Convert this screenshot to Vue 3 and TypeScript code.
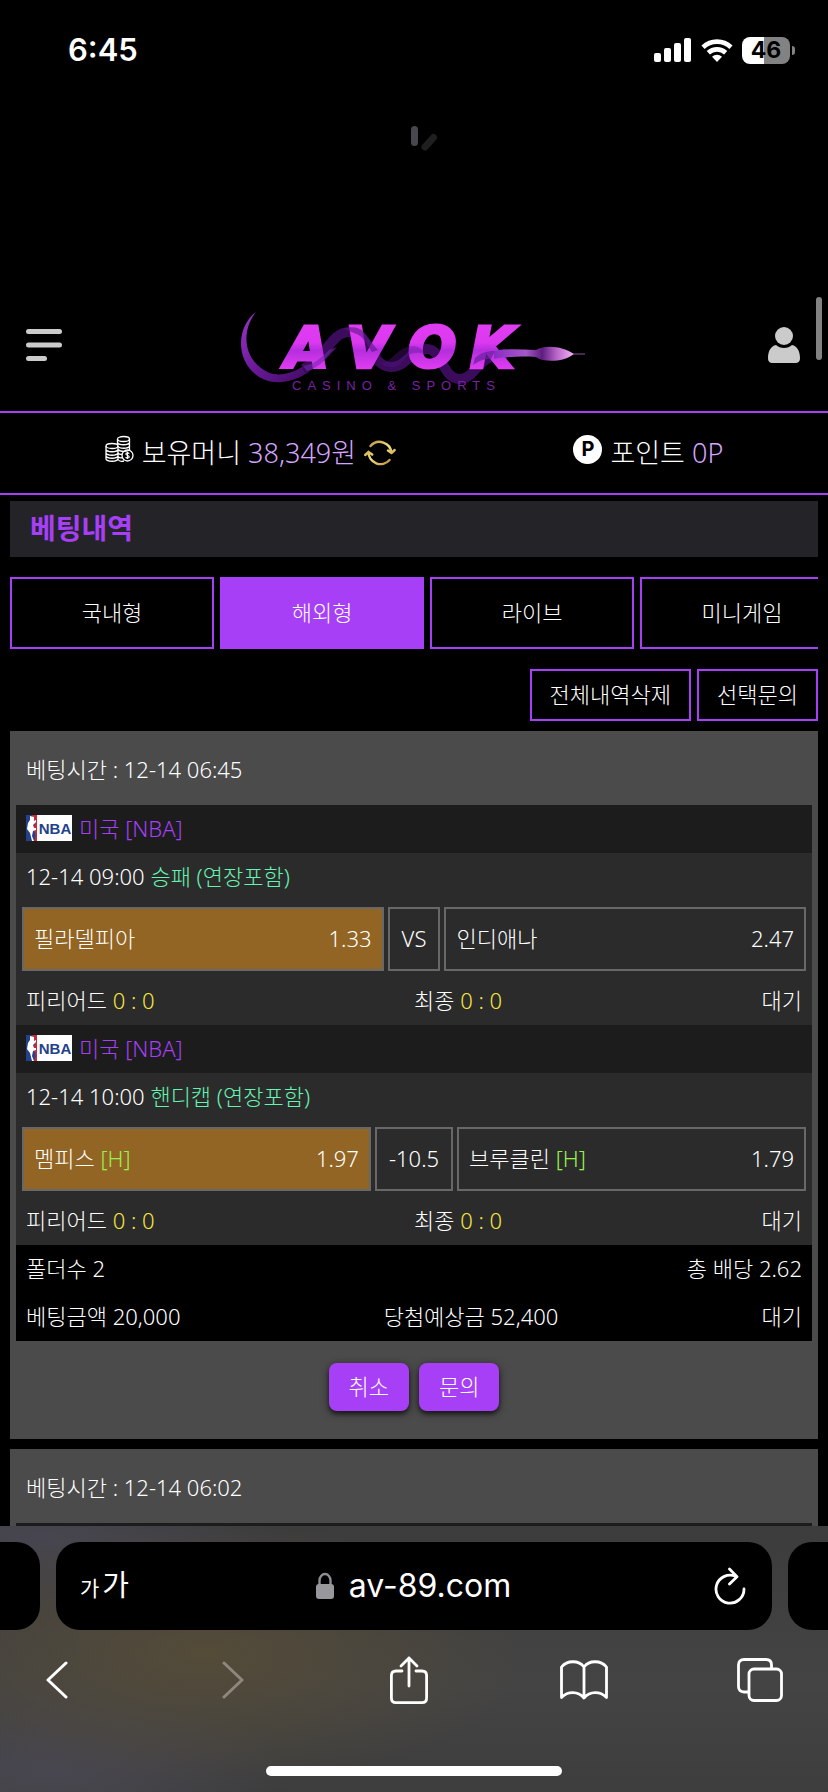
<script setup lang="ts">
interface Team { name: string; odds: string; picked?: boolean; handicap?: boolean }
interface Match { kickoff: string; market: string; home: Team; middle: string; away: Team }
interface Slip { time: string; matches: Match[] }

const tabs: string[] = ['국내형', '해외형', '라이브', '미니게임']
const activeTab = '해외형'

const slip: Slip = {
  time: '12-14 06:45',
  matches: [
    {
      kickoff: '12-14 09:00',
      market: '승패 (연장포함)',
      home: { name: '필라델피아', odds: '1.33', picked: true },
      middle: 'VS',
      away: { name: '인디애나', odds: '2.47' },
    },
    {
      kickoff: '12-14 10:00',
      market: '핸디캡 (연장포함)',
      home: { name: '멤피스', odds: '1.97', picked: true, handicap: true },
      middle: '-10.5',
      away: { name: '브루클린', odds: '1.79', handicap: true },
    },
  ],
}
</script>

<template>
  <div class="phone">
    <div class="status">
      <span class="clock">6:45</span>
      <div class="indicators">
        <svg width="38" height="24" viewBox="0 0 38 24" fill="#fff">
          <rect x="0" y="15" width="7" height="9" rx="2" />
          <rect x="10" y="10" width="7" height="14" rx="2" />
          <rect x="20" y="5" width="7" height="19" rx="2" />
          <rect x="30" y="0" width="7" height="24" rx="2" />
        </svg>
        <svg width="32" height="24" viewBox="0 0 32 24" fill="none" stroke="#fff" stroke-width="4.6">
          <path d="M2 9.2a20.5 20.5 0 0 1 28 0" />
          <path d="M7.3 14.8a12.8 12.8 0 0 1 17.4 0" />
          <path d="M16 24l-5-5.2a7.4 7.4 0 0 1 10 0z" fill="#fff" stroke="none" />
        </svg>
        <div class="battery"><span>46</span></div>
      </div>
    </div>

    <main class="page">
      <div class="pull">
        <svg width="56" height="56" viewBox="0 0 56 56" stroke-width="7" stroke-linecap="round">
          <path d="M28.500 5.500v13" stroke="#48474d" />
          <path d="M47.500 13.500l-8.500 9.500" stroke="#1f1f20" />
        </svg>
      </div>
      <i class="scroll-thumb"></i>

      <header class="top">
        <button class="plain" aria-label="메뉴">
          <svg width="36" height="32" viewBox="0 0 36 32" fill="#cbcbcb">
            <rect width="36" height="5" rx="2.500" />
            <rect y="13.500" width="36" height="5" rx="2.500" />
            <rect y="27" width="21" height="5" rx="2.500" />
          </svg>
        </button>
        <a href="#" class="logo" aria-label="AVOK">
          <svg width="352" height="94" viewBox="0 0 352 94">
            <defs>
              <linearGradient id="letters" gradientUnits="userSpaceOnUse" x1="0" y1="27" x2="0" y2="71">
                <stop offset="0" stop-color="#e03cf2" />
                <stop offset=".4" stop-color="#dc38f0" />
                <stop offset=".58" stop-color="#b42ede" />
                <stop offset=".75" stop-color="#c834e6" />
                <stop offset="1" stop-color="#e03cf2" />
              </linearGradient>
              <linearGradient id="head" x1="0" y1="0" x2="1" y2="0">
                <stop offset="0" stop-color="#8a2bc4" />
                <stop offset=".4" stop-color="#a55ac6" />
                <stop offset=".6" stop-color="#5d1c80" />
                <stop offset=".78" stop-color="#b765c8" />
                <stop offset="1" stop-color="#f7b4f8" />
              </linearGradient>
              <linearGradient id="tail" x1="0" y1="0" x2="1" y2="1">
                <stop offset="0" stop-color="#9a35c8" />
                <stop offset=".5" stop-color="#6a1a98" />
                <stop offset="1" stop-color="#3f0b63" />
              </linearGradient>
            </defs>
            <path d="M17 14C-2 28-5 62 20 79c15 9 33 6 50-5l-4-7C50 78 34 80 22 70 3 56 4 30 17 14z" fill="url(#tail)" />
            <path d="M64 71C86 62 92 34 110 34c20 0 22 35 42 35 16 0 20-18 36-18 15 0 16 30 32 30 18 0 16-24 48-25" fill="none" stroke="#3a0c5b" stroke-width="10" />
            <text class="wordmark" x="46 107 169 231" y="70" fill="url(#letters)" stroke="url(#letters)">AVOK</text>
            <path d="M104 31c8-3 16-2 21 3 6 7 8 12 14 18l-6 2c-8-12-10-17-18-19-4-2-7-3-11-4z" fill="#5a1787" opacity=".6" />
            <path d="M68 73c14-4 20-14 30-24l-8 3c-8 8-14 14-26 16z" fill="#7a24b4" opacity=".6" />
            <path d="M142 66c12-3 16-17 32-18 6 0 10 4 12 8-14-4-18 2-24 9-4 5-10 5-16 3z" fill="#5a1590" opacity=".35" />
            <path d="M236 60c6-5 10-7 20-7l-4 8c-8 0-12 2-18 6z" fill="#6a1fa0" opacity=".7" />
            <path d="M255 53c14-3 28-1 42-1 10-6 28-3 38 4-10 8-30 9-38 3-16-1-32 0-42 2z" fill="url(#head)" />
            <path d="M334 56h12" stroke="#87579a" />
            <text class="tagline" x="53" y="92">CASINO &amp; SPORTS</text>
          </svg>
        </a>
        <button class="plain" aria-label="내 정보">
          <svg width="32" height="36" viewBox="0 0 32 36" fill="#cbcbcb">
            <circle cx="16" cy="9" r="9" />
            <path d="M8 18c4 4 12 4 16 0 5 1 8 6 8 13 0 4-2 5-5 5H5c-3 0-5-1-5-5 0-7 3-12 8-13z" />
          </svg>
        </button>
      </header>

      <section class="balance">
        <div class="balance-item">
          <svg width="29" height="28" viewBox="0 0 29 28" fill="none" stroke="#fff" stroke-width="1.300">
            <ellipse cx="18.500" cy="4" rx="6" ry="2.500" />
            <path d="M12.500 4v6M24.500 4v11M12.500 7.500c1 3 11 3 12 0M12.500 11c2 3 11 3 12 0M13 14.500c2 2.500 10 2.500 11.500 0" />
            <ellipse cx="7" cy="11" rx="6" ry="2.500" />
            <path d="M1 11v13c1 3 11 3 12 0V11M1 14.500c1 3 11 3 12 0M1 18c1 3 11 3 12 0M1 21c1 3 11 3 12 0M13 18c1 1 3 1.500 4 1.200M13 21.500c1 1 3 1.500 4 1.200M13 24.500c1 1.500 4 2 6 1.500" />
            <circle cx="22.500" cy="20.500" r="5.500" />
            <path d="M24.300 18.700c-1-1.300-3.500-1-3.500.4 0 1.700 3.500 1 3.500 2.700 0 1.500-2.700 1.700-3.700.3M22.500 17v7" stroke-width="1.100" />
          </svg>
          <span>보유머니 <b>38,349원</b></span>
          <button class="plain" aria-label="새로고침">
            <svg width="32" height="28" viewBox="0 0 32 28" fill="none" stroke-width="2.400" stroke-linecap="round" stroke-linejoin="round">
              <defs>
                <linearGradient id="gold" x1="0" y1="0" x2="1" y2="1">
                  <stop offset="0" stop-color="#b98a3a" />
                  <stop offset=".5" stop-color="#f4df80" />
                  <stop offset="1" stop-color="#b5822f" />
                </linearGradient>
              </defs>
              <path stroke="url(#gold)" d="M6.500 7A12 12 0 0 1 27.500 14M27.500 14l-3.500-2.500M27.500 14l3.200-3M25.500 21A12 12 0 0 1 4.500 13M4.500 13l-3.300 3M4.500 13l3.700 2.500" />
            </svg>
          </button>
        </div>
        <div class="balance-item">
          <span class="point-badge">P</span>
          <span>포인트 <b>0P</b></span>
        </div>
      </section>

      <div class="content">
        <h1>베팅내역</h1>
        <nav class="tabs">
          <button v-for="tab in tabs" :key="tab" class="tab" :class="{ active: tab === activeTab }">{{ tab }}</button>
        </nav>
        <div class="actions">
          <button>전체내역삭제</button>
          <button>선택문의</button>
        </div>

        <article class="slip">
          <p class="slip-time">베팅시간 : {{ slip.time }}</p>
          <div class="slip-body">
            <section v-for="match in slip.matches" :key="match.kickoff" class="match">
              <div class="row league">
                <svg width="46" height="26" viewBox="0 0 46 26">
                  <rect width="46" height="26" fill="#fff" />
                  <rect width="11" height="26" fill="#24418c" />
                  <path d="M6 0h5v26H8c2-4 2-7 0-10l-1-4 2-3-2-4z" fill="#c22c3a" />
                  <path d="M4 1l4 1v4l2-1v2l-3 3 1 3h2v2l-3 1-1 5 2 5H6l-2-8-3-4 1-6 2-3z" fill="#fff" />
                  <text class="nba" x="29" y="19" text-anchor="middle">NBA</text>
                </svg>
                <span>미국 [NBA]</span>
              </div>
              <div class="row">
                <span>{{ match.kickoff }} <em class="market">{{ match.market }}</em></span>
              </div>
              <div class="odds">
                <button class="team" :class="{ picked: match.home.picked }">
                  <span>{{ match.home.name }} <em v-if="match.home.handicap" class="handicap">[H]</em></span>
                  <span>{{ match.home.odds }}</span>
                </button>
                <span class="middle">{{ match.middle }}</span>
                <button class="team">
                  <span>{{ match.away.name }} <em v-if="match.away.handicap" class="handicap">[H]</em></span>
                  <span>{{ match.away.odds }}</span>
                </button>
              </div>
              <div class="row">
                <span>피리어드 <em class="score">0 : 0</em></span>
                <span>최종 <em class="score">0 : 0</em></span>
                <span>대기</span>
              </div>
            </section>
            <div class="summary">
              <div class="row"><span>폴더수 2</span><span>총 배당 2.62</span></div>
              <div class="row"><span>베팅금액 20,000</span><span>당첨예상금 52,400</span><span>대기</span></div>
            </div>
          </div>
          <div class="slip-actions">
            <button>취소</button>
            <button>문의</button>
          </div>
        </article>

        <article class="slip">
          <p class="slip-time">베팅시간 : 12-14 06:02</p>
          <div class="slip-body"><div class="row league"></div></div>
        </article>
      </div>
    </main>

    <footer class="browser">
      <div class="address-strip">
        <i class="peek left"></i>
        <div class="address">
          <button class="plain text-size" aria-label="글자 크기"><small>가</small>가</button>
          <a href="#" class="host">
            <svg width="20" height="28" viewBox="0 0 20 28">
              <path d="M4.500 13V8.500a5.500 6.500 0 0 1 11 0V13" fill="none" stroke="#8e8d92" stroke-width="2.400" />
              <rect x="1" y="12" width="18" height="15" rx="3" fill="#98979c" />
            </svg>
            <span>av-89.com</span>
          </a>
          <button class="plain reload" aria-label="페이지 새로고침">
            <svg width="32" height="38" viewBox="0 0 32 38" fill="none" stroke="#fff" stroke-width="2.800" stroke-linecap="round" stroke-linejoin="round">
              <path d="M22 9.500A14 14 0 1 0 30 22M15.500 2l7.500 7.700-7.500 7.300" />
            </svg>
          </button>
        </div>
        <i class="peek right"></i>
      </div>
      <nav class="tools">
        <button class="plain" aria-label="뒤로">
          <svg width="22" height="38" viewBox="0 0 22 38" fill="none" stroke="#fff" stroke-width="3" stroke-linecap="round" stroke-linejoin="round"><path d="M20 2L2 19l18 17" /></svg>
        </button>
        <button class="plain" aria-label="앞으로" disabled>
          <svg width="22" height="38" viewBox="0 0 22 38" fill="none" stroke="#8d887e" stroke-width="3" stroke-linecap="round" stroke-linejoin="round"><path d="M2 2l18 17L2 36" /></svg>
        </button>
        <button class="plain" aria-label="공유">
          <svg width="38" height="48" viewBox="0 0 38 48" fill="none" stroke="#fff" stroke-width="2.800" stroke-linecap="round" stroke-linejoin="round"><path d="M12 15H6q-4.600 0-4.600 4.600V42q0 4.600 4.600 4.600h26q4.600 0 4.600-4.600V19.600q0-4.600-4.600-4.600h-6M19 30V2M11 10l8-8 8 8" /></svg>
        </button>
        <button class="plain" aria-label="책갈피">
          <svg width="48" height="40" viewBox="0 0 48 40" fill="none" stroke="#fff" stroke-width="2.800" stroke-linejoin="round"><path d="M24 7v31M24 7C19 0 7 0 1.500 7v30.500C8 31 18 31 24 38c6-7 16-7 22.500-.5V7C41 0 29 0 24 7z" /></svg>
        </button>
        <button class="plain" aria-label="탭">
          <svg width="46" height="44" viewBox="0 0 46 44" fill="none" stroke="#fff" stroke-width="2.800"><rect x="12" y="11" width="32.500" height="31.500" rx="5" /><path d="M12 34H7q-5.500 0-5.500-5.500V7Q1.500 1.500 7 1.500h22q5.500 0 5.500 5.500v4" /></svg>
        </button>
      </nav>
      <i class="home-bar"></i>
    </footer>
  </div>
</template>

<style>
html,
body {
  margin: 0;
  background: #000;
}
</style>

<style scoped>
* {
  box-sizing: border-box;
}
.phone {
  display: flex;
  flex-direction: column;
  height: 100vh;
  overflow: hidden;
  background: #000;
  color: #fff;
  font-family: "Noto Sans", "Noto Sans CJK KR", sans-serif;
  font-size: 22px;
  font-weight: 300;
  line-height: 46px;
}
button {
  font: inherit;
  color: inherit;
  cursor: pointer;
}
a {
  color: inherit;
  text-decoration: none;
}
em,
b,
i {
  font-style: normal;
  font-weight: inherit;
}
svg {
  display: block;
  flex: none;
}
.plain {
  border: 0;
  padding: 0;
  background: none;
}
.status {
  display: flex;
  flex: none;
  justify-content: space-between;
  align-items: center;
  height: 100px;
  padding: 0 33px 0 68px;
  font-family: Inter, sans-serif;
}
.clock {
  font-size: 31px;
  font-weight: 600;
}
.indicators {
  display: flex;
  align-items: center;
  gap: 9px;
}
.battery {
  position: relative;
  width: 48px;
  height: 27px;
  margin-right: 5px;
  border-radius: 8px;
  background: linear-gradient(90deg, #fff 46%, #828282 46%);
  color: #000;
  font-size: 23px;
  font-weight: 700;
  line-height: 27px;
  text-align: center;
}
.battery::after {
  content: "";
  position: absolute;
  left: 50px;
  top: 9px;
  width: 3px;
  height: 9px;
  border-radius: 0 3px 3px 0;
  background: #828282;
}
.page {
  position: relative;
  flex: 1;
  min-height: 0;
  overflow: hidden;
}
.pull {
  display: flex;
  justify-content: center;
  height: 179px;
  padding-top: 24px;
}
.scroll-thumb {
  position: absolute;
  top: 197px;
  right: 6px;
  width: 6px;
  height: 63px;
  border-radius: 3px;
  background: #828282;
}
.top {
  display: flex;
  justify-content: space-between;
  align-items: center;
  height: 132px;
  padding: 0 28px 0 26px;
}
.wordmark {
  font: italic 700 57px "DejaVu Sans", sans-serif;
  stroke-width: 3px;
}
.tagline {
  fill: #7a22a4;
  font: 400 13px "Liberation Sans", sans-serif;
  letter-spacing: 6px;
}
.balance {
  display: flex;
  justify-content: space-around;
  align-items: center;
  height: 84px;
  padding: 0 16px;
  border: solid #a63ff6;
  border-width: 2px 0;
  font-size: 27px;
}
.balance-item {
  display: flex;
  align-items: center;
  gap: 8px;
}
.balance-item > svg,
.point-badge {
  margin-bottom: 8px;
}
.balance-item b {
  color: #d3a4fb;
}
.point-badge {
  width: 29px;
  height: 29px;
  border-radius: 50%;
  background: #fff;
  color: #000;
  font: 700 20px/29px Inter, sans-serif;
  text-align: center;
}
.content {
  padding: 6px 10px 0;
}
h1 {
  margin: 0;
  padding: 0 20px;
  height: 56px;
  background: #242327;
  color: #a63ff6;
  font-size: 28px;
  font-weight: 700;
  line-height: 54px;
}
.tabs {
  display: flex;
  gap: 6px;
  margin-top: 20px;
  overflow: hidden;
}
.tab {
  flex: 0 0 25.25%;
  height: 72px;
  padding: 0 0 2px;
  border: 2px solid #a63ff6;
  background: #000;
}
.tab.active {
  background: #a63ff6;
}
.actions {
  display: flex;
  justify-content: flex-end;
  gap: 6px;
  margin: 20px 0 10px;
}
.actions button {
  height: 52px;
  padding: 0 18px 2px;
  border: 2px solid #a63ff6;
  background: #000;
}
.slip {
  margin-bottom: 10px;
  padding: 0 6px;
  background: #4b4b4b;
}
.slip-time {
  margin: 0;
  padding: 15px 10px 13px;
}
.slip-body {
  background: #2b2b2b;
}
.row {
  display: flex;
  justify-content: space-between;
  height: 48px;
  padding: 0 10px;
}
.league {
  justify-content: flex-start;
  gap: 7px;
  background: #1c1c1c;
  color: #a63ff6;
}
.league svg {
  margin-top: 10px;
}
.nba {
  fill: #24418c;
  font: 700 15px "Liberation Sans", sans-serif;
}
.market {
  color: #66f3b0;
}
.score {
  color: #f7e63d;
}
.handicap {
  color: #98f04e;
}
.odds {
  display: flex;
  gap: 4px;
  padding: 6px;
}
.team,
.middle {
  height: 64px;
  padding: 0 10px;
  border: 2px solid #686868;
  background: none;
  line-height: 58px;
}
.middle {
  padding: 0 12px;
}
.team {
  display: flex;
  flex: 1;
  justify-content: space-between;
}
.team.picked {
  background: #926524;
}
.summary {
  background: #000;
}
.slip-actions {
  display: flex;
  justify-content: center;
  gap: 10px;
  padding: 22px 0 28px;
}
.slip-actions button {
  height: 48px;
  padding: 0 20px 2px;
  border: 0;
  border-radius: 8px;
  background: #a63ff6;
  box-shadow: 0 3px 4px #0008, 0 2px 10px #0006;
}
.browser {
  flex: none;
  height: 266px;
  padding-top: 16px;
  background:
    radial-gradient(ellipse 320px 130px at 25% 48%, #544b38 0, #544b3800 100%),
    radial-gradient(ellipse 240px 80px at 5% 4%, #474650 0, #47465000 100%),
    radial-gradient(ellipse 240px 90px at 6% 92%, #484750 0, #48475000 100%),
    linear-gradient(#3c3c3c, #444 60%, #3d3d3d);
}
.address-strip {
  display: flex;
  gap: 16px;
}
.peek {
  flex: 0 0 40px;
  height: 88px;
  background: #000;
}
.peek.left {
  border-radius: 0 24px 24px 0;
}
.peek.right {
  border-radius: 24px 0 0 24px;
}
.address {
  display: flex;
  flex: 1;
  align-items: center;
  height: 88px;
  padding: 0 26px 0 24px;
  border-radius: 24px;
  background: #000;
}
.text-size {
  flex: 1;
  font-size: 29px;
  font-weight: 400;
  text-align: left;
}
.text-size small {
  margin-right: 3px;
  font-size: 21px;
}
.reload {
  display: flex;
  flex: 1;
  justify-content: flex-end;
}
.host {
  display: flex;
  align-items: center;
  gap: 14px;
  font: 400 32px/48px Inter, sans-serif;
}
.tools {
  display: flex;
  justify-content: space-between;
  align-items: center;
  height: 100px;
  padding: 0 45px 0 34px;
}
.tools button {
  display: flex;
  justify-content: center;
  width: 46px;
}
.home-bar {
  display: block;
  width: 296px;
  height: 10px;
  margin: 36px auto 0;
  border-radius: 5px;
  background: #fff;
}
</style>
